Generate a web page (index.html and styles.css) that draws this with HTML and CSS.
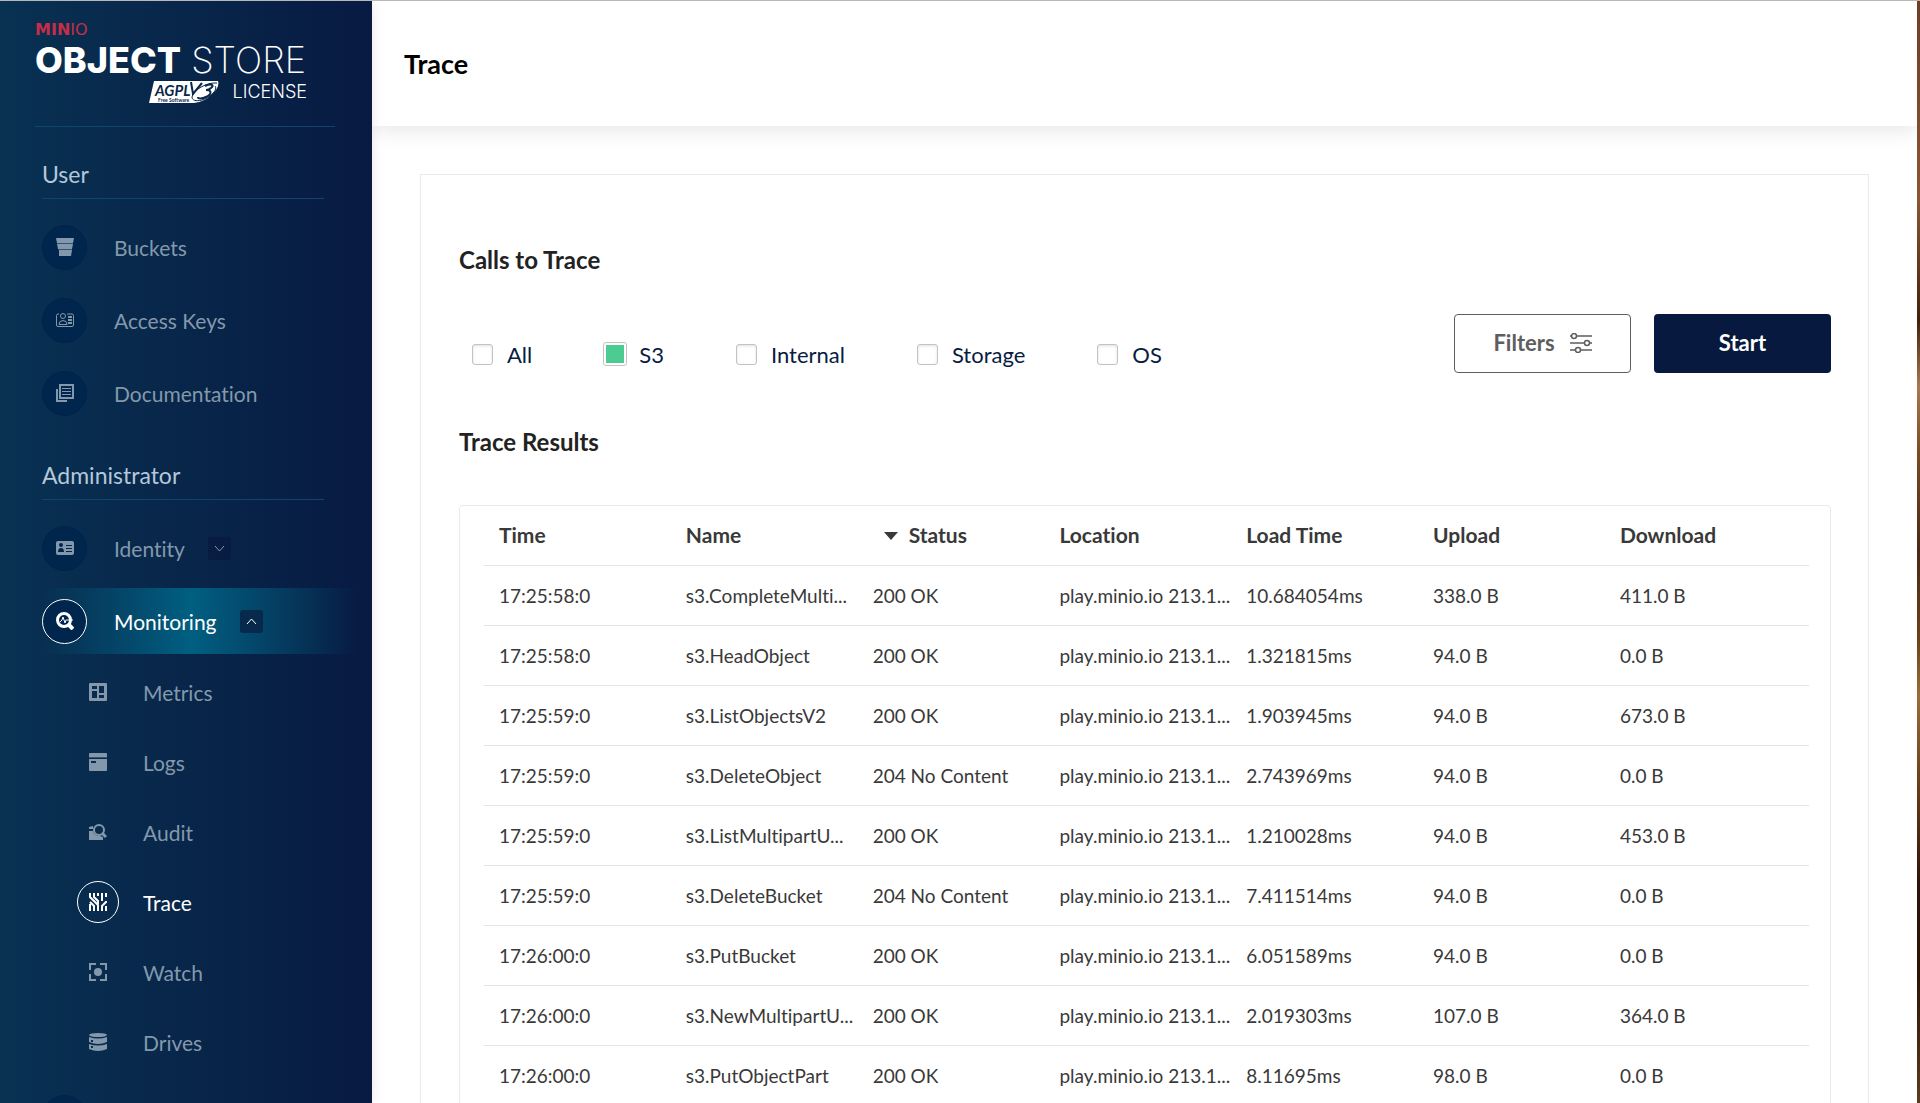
FILE: index.html
```
<!DOCTYPE html>
<html lang="en">

<head>
    <meta charset="UTF-8">
    <meta name="viewport" content="width=device-width, initial-scale=1.0">
    <title>MinIO Console</title>
    <link rel="stylesheet" href="styles.css">
</head>

<body>
    <!-- Sidebar -->
    <aside class="sidebar">
        <div class="logo">
            <div class="logo-brand"><b>MIN</b>IO</div>
            <div class="logo-name"><b>OBJECT</b> STORE</div>
            <div class="logo-license">
                <svg class="agpl" width="70" height="22" viewBox="0 0 70 22">
                    <path d="M5 0H69Q71 6 63 13Q56 21 45 22H0Z" fill="#fff" />
                    <path d="M42 1L44 13L53 2" fill="none" stroke="#08274b" stroke-width="2" />
                    <path d="M68 2C58 1 44 9 43 16C43 22 55 20 61 15C66 11 68 7 66 5" fill="none" stroke="#08274b" stroke-width="1" />
                    <path d="M56 5C62 2 66 4 62 7C60 9 58 9 57 9C63 9 63 13 57 16C53 18 49 18 49 16" fill="none" stroke="#08274b" stroke-width="2" />
                    <text x="6" y="15" font-size="15" font-style="italic" font-weight="700" fill="#08274b">AGPL</text>
                    <text x="9" y="21" font-size="5" font-weight="700" fill="#08274b">Free Software</text>
                </svg>
                <span>LICENSE</span>
            </div>
        </div>

        <nav class="menu">
            <h2 class="menu-title">User</h2>
            <ul class="menu-list">
                <li>
                    <a href="#" class="menu-item">
                        <span class="menu-icon">
                            <svg width="18" height="18" viewBox="0 0 18 18" fill="currentColor">
                                <path d="M0 0H18L17 5H1ZM1 6H17L16 11H2ZM3 12H16L15 18H3Z" />
                                <path d="M1 5H17V6H1ZM2 11H16V12H2Z" opacity=".4" />
                            </svg>
                        </span>
                        Buckets
                    </a>
                </li>
                <li>
                    <a href="#" class="menu-item">
                        <span class="menu-icon">
                            <svg width="18" height="18" viewBox="0 0 18 18" fill="none" stroke="currentColor">
                                <path d="M3 3H2Q.5 3 .5 4.500V14Q.5 15.500 2 15.500H16Q17.500 15.500 17.500 14V4.500Q17.500 3 16 3H11" />
                                <circle cx="7" cy="5" r="2.500" />
                                <path d="M3 13.500Q3 9.500 7 9.500T11 13.500Z" />
                                <path d="M12 6H16M12 9H16M12 12H16" stroke-width="2" />
                            </svg>
                        </span>
                        Access Keys
                    </a>
                </li>
                <li>
                    <a href="#" class="menu-item">
                        <span class="menu-icon">
                            <svg width="18" height="18" viewBox="0 0 18 18" fill="none" stroke="currentColor">
                                <path d="M4 1H17V14H4Z" stroke-width="2" />
                                <path d="M1 5V17H11" stroke-width="2" />
                                <path d="M6 4.500H15M6 7.500H15M6 10.500H15" />
                            </svg>
                        </span>
                        Documentation
                    </a>
                </li>
            </ul>

            <h2 class="menu-title">Administrator</h2>
            <ul class="menu-list">
                <li>
                    <a href="#" class="menu-item">
                        <span class="menu-icon">
                            <svg width="18" height="18" viewBox="0 0 18 18">
                                <rect y="2" width="18" height="14" rx="2" fill="currentColor" />
                                <g fill="#00264d">
                                    <circle cx="5" cy="6" r="2" />
                                    <path d="M2 13Q2 9 5 9T8 13ZM10 6H16V7H10ZM10 9H16V10H10ZM10 12H16V13H10Z" />
                                </g>
                            </svg>
                        </span>
                        Identity
                        <span class="arrow">
                            <svg width="11" height="7" viewBox="0 0 11 7" fill="none" stroke="currentColor"><path d="M1 1L5.500 6L10 1" /></svg>
                        </span>
                    </a>
                </li>
                <li>
                    <a href="#" class="menu-item active">
                        <span class="menu-icon">
                            <svg width="18" height="18" viewBox="0 0 18 18" fill="none" stroke="currentColor">
                                <circle cx="8" cy="8" r="6.500" stroke-width="3" />
                                <path d="M12 12L17 17" stroke-width="4" />
                                <path d="M4 10L6 8L7 5L9 11L10 8H17" />
                            </svg>
                        </span>
                        Monitoring
                        <span class="arrow">
                            <svg width="11" height="7" viewBox="0 0 11 7" fill="none" stroke="currentColor"><path d="M1 6L5.500 1L10 6" /></svg>
                        </span>
                    </a>
                    <ul class="submenu">
                        <li>
                            <a href="#" class="sub-item">
                                <span class="sub-icon">
                                    <svg width="18" height="18" viewBox="0 0 18 18" fill="currentColor" fill-rule="evenodd">
                                        <path d="M1 0H17Q18 0 18 1V17Q18 18 17 18H1Q0 18 0 17V1Q0 0 1 0ZM3 3V6H8V3ZM3 8V15H8V8ZM10 3V10H15V3ZM10 12V15H15V12Z" />
                                    </svg>
                                </span>
                                Metrics
                            </a>
                        </li>
                        <li>
                            <a href="#" class="sub-item">
                                <span class="sub-icon">
                                    <svg width="18" height="18" viewBox="0 0 18 18" fill="currentColor" fill-rule="evenodd">
                                        <path d="M1 0H17Q18 0 18 1V4H0V1Q0 0 1 0ZM0 6H18V17Q18 18 17 18H1Q0 18 0 17ZM2 8V10H7V8Z" />
                                        <path d="M0 4H18V5H0Z" opacity=".4" />
                                    </svg>
                                </span>
                                Logs
                            </a>
                        </li>
                        <li>
                            <a href="#" class="sub-item">
                                <span class="sub-icon">
                                    <svg width="18" height="18" viewBox="0 0 18 18" fill="currentColor">
                                        <path d="M0 4L4 3V6H0ZM0 8H4Q5 13 11 13L14 14V17H0Z" />
                                        <circle cx="10" cy="7" r="5" fill="none" stroke="currentColor" stroke-width="2" />
                                        <path d="M13 10L17 14" stroke="currentColor" stroke-width="3" />
                                    </svg>
                                </span>
                                Audit
                            </a>
                        </li>
                        <li>
                            <a href="#" class="sub-item active">
                                <span class="sub-icon">
                                    <svg width="18" height="18" viewBox="0 0 18 18" fill="none" stroke="currentColor" stroke-width="2">
                                        <path d="M1 0V4L9 12V18M5 0V4L9 8V11M9 0V3M13 0V8M17 0V4M1 9L5 13V18M1 11V18M13 18V13L17 9V8M17 13V18" />
                                    </svg>
                                </span>
                                Trace
                            </a>
                        </li>
                        <li>
                            <a href="#" class="sub-item">
                                <span class="sub-icon">
                                    <svg width="18" height="18" viewBox="0 0 18 18" fill="none" stroke="currentColor" stroke-width="2">
                                        <path d="M1 7V1H7M11 1H17V7M17 11V17H11M7 17H1V11" />
                                        <circle cx="9" cy="9" r="4" fill="currentColor" stroke="none" />
                                    </svg>
                                </span>
                                Watch
                            </a>
                        </li>
                        <li>
                            <a href="#" class="sub-item">
                                <span class="sub-icon">
                                    <svg width="18" height="18" viewBox="0 0 18 18" fill="currentColor" fill-rule="evenodd">
                                        <ellipse cx="9" cy="2" rx="9" ry="2" />
                                        <path d="M0 4Q9 7 18 4V9Q9 13 0 9ZM2 7V9H4V7ZM0 11Q9 14 18 11V16Q9 20 0 16ZM2 13V15H4V13Z" />
                                    </svg>
                                </span>
                                Drives
                            </a>
                        </li>
                    </ul>
                </li>
                <li>
                    <a href="#" class="menu-item" aria-label="Notifications">
                        <span class="menu-icon"></span>
                    </a>
                </li>
            </ul>
        </nav>
    </aside>

    <!-- Main content -->
    <main class="main">
        <header class="page-header">
            <h1>Trace</h1>
        </header>

        <section class="card">
            <h3>Calls to Trace</h3>
            <div class="toolbar">
                <div class="checks">
                    <label class="check"><input type="checkbox"><span>All</span></label>
                    <label class="check"><input type="checkbox" checked><span>S3</span></label>
                    <label class="check"><input type="checkbox"><span>Internal</span></label>
                    <label class="check"><input type="checkbox"><span>Storage</span></label>
                    <label class="check"><input type="checkbox"><span>OS</span></label>
                </div>
                <div class="actions">
                    <button type="button" class="btn btn-outline">
                        Filters
                        <svg width="22" height="20" viewBox="0 0 22 20" fill="none" stroke="currentColor" stroke-width="1.500">
                            <path d="M0 3H2M7 3H22M0 10H14M19 10H22M0 17H6M11 17H22" />
                            <circle cx="4" cy="3" r="2.500" />
                            <circle cx="17" cy="10" r="2.500" />
                            <circle cx="8" cy="17" r="2.500" />
                        </svg>
                    </button>
                    <button type="button" class="btn btn-primary">Start</button>
                </div>
            </div>

            <h3>Trace Results</h3>
            <div class="table-box">
                <table>
                    <thead>
                        <tr>
                            <th>Time</th>
                            <th>Name</th>
                            <th class="sorted">
                                <svg width="14" height="8" viewBox="0 0 14 8" fill="currentColor"><path d="M0 0H14L7 8Z" /></svg>Status
                            </th>
                            <th>Location</th>
                            <th>Load Time</th>
                            <th>Upload</th>
                            <th>Download</th>
                        </tr>
                    </thead>
                    <tbody>
                        <tr>
                            <td>17:25:58:0</td>
                            <td>s3.CompleteMulti...</td>
                            <td>200 OK</td>
                            <td>play.minio.io 213.1...</td>
                            <td>10.684054ms</td>
                            <td>338.0 B</td>
                            <td>411.0 B</td>
                        </tr>
                        <tr>
                            <td>17:25:58:0</td>
                            <td>s3.HeadObject</td>
                            <td>200 OK</td>
                            <td>play.minio.io 213.1...</td>
                            <td>1.321815ms</td>
                            <td>94.0 B</td>
                            <td>0.0 B</td>
                        </tr>
                        <tr>
                            <td>17:25:59:0</td>
                            <td>s3.ListObjectsV2</td>
                            <td>200 OK</td>
                            <td>play.minio.io 213.1...</td>
                            <td>1.903945ms</td>
                            <td>94.0 B</td>
                            <td>673.0 B</td>
                        </tr>
                        <tr>
                            <td>17:25:59:0</td>
                            <td>s3.DeleteObject</td>
                            <td>204 No Content</td>
                            <td>play.minio.io 213.1...</td>
                            <td>2.743969ms</td>
                            <td>94.0 B</td>
                            <td>0.0 B</td>
                        </tr>
                        <tr>
                            <td>17:25:59:0</td>
                            <td>s3.ListMultipartU...</td>
                            <td>200 OK</td>
                            <td>play.minio.io 213.1...</td>
                            <td>1.210028ms</td>
                            <td>94.0 B</td>
                            <td>453.0 B</td>
                        </tr>
                        <tr>
                            <td>17:25:59:0</td>
                            <td>s3.DeleteBucket</td>
                            <td>204 No Content</td>
                            <td>play.minio.io 213.1...</td>
                            <td>7.411514ms</td>
                            <td>94.0 B</td>
                            <td>0.0 B</td>
                        </tr>
                        <tr>
                            <td>17:26:00:0</td>
                            <td>s3.PutBucket</td>
                            <td>200 OK</td>
                            <td>play.minio.io 213.1...</td>
                            <td>6.051589ms</td>
                            <td>94.0 B</td>
                            <td>0.0 B</td>
                        </tr>
                        <tr>
                            <td>17:26:00:0</td>
                            <td>s3.NewMultipartU...</td>
                            <td>200 OK</td>
                            <td>play.minio.io 213.1...</td>
                            <td>2.019303ms</td>
                            <td>107.0 B</td>
                            <td>364.0 B</td>
                        </tr>
                        <tr>
                            <td>17:26:00:0</td>
                            <td>s3.PutObjectPart</td>
                            <td>200 OK</td>
                            <td>play.minio.io 213.1...</td>
                            <td>8.11695ms</td>
                            <td>98.0 B</td>
                            <td>0.0 B</td>
                        </tr>
                    </tbody>
                </table>
            </div>
        </section>
    </main>
    <div class="edge"></div>
</body>

</html>
```
FILE: styles.css
```
/* Reset */
* {
    margin: 0;
    padding: 0;
    box-sizing: border-box;
    font-family: Lato, sans-serif;
    font-variant-ligatures: none;
}

body {
    display: flex;
    height: 100vh;
    overflow: hidden;
    border-top: 1px solid #b8b8b8;
    background-color: #fff;
    color: #393939;
}

ul {
    list-style: none;
}

a {
    text-decoration: none;
}

/* Sidebar */
.sidebar {
    flex: 0 0 372px;
    padding: 18px 36px 0 35px;
    background: linear-gradient(90deg, #083152 0%, #081a42 100%);
    box-shadow: 0 0 12px rgba(0, 0, 0, 0.1);
    overflow: hidden;
    z-index: 1;
}

.logo {
    width: 300px;
    height: 108px;
    padding-right: 28px;
    border-bottom: 1px solid #0f446c;
    color: #fff;
}

.logo-brand {
    font-family: "DejaVu Sans", sans-serif;
    font-size: 16px;
    line-height: 22px;
    color: #c72c48;
}

.logo-brand b {
    font-family: "DejaVu Sans", sans-serif;
    font-weight: 700;
}

.logo-name {
    font-family: Inter, sans-serif;
    font-size: 36px;
    font-weight: 200;
    line-height: 38px;
    white-space: nowrap;
}

.logo-name b {
    font-family: Inter, sans-serif;
    font-weight: 800;
}

.logo-license {
    display: flex;
    justify-content: flex-end;
    align-items: center;
    gap: 14px;
    font-size: 18px;
    line-height: 26px;
}

.logo-license span {
    font-family: Inter, sans-serif;
    font-weight: 300;
}

/* Menu */
.menu {
    padding: 0 12px 0 7px;
}

.menu-title {
    height: 72px;
    padding-top: 31px;
    border-bottom: 1px solid #0f446c;
    font-size: 23px;
    font-weight: 400;
    line-height: 32px;
    color: #b4c8da;
}

.menu-list {
    display: flex;
    flex-direction: column;
    gap: 7px;
    margin: 15px -32px 2px 0;
}

.menu-item {
    display: flex;
    align-items: center;
    height: 66px;
    font-size: 21px;
    color: #8399ab;
}

.menu-icon {
    display: flex;
    justify-content: center;
    align-items: center;
    width: 45px;
    height: 45px;
    margin-right: 27px;
    border: 1px solid #00234c;
    border-radius: 50%;
    background-color: #00264d;
}

.arrow {
    display: flex;
    justify-content: center;
    align-items: center;
    width: 23px;
    height: 23px;
    margin-left: 23px;
    border-radius: 3px;
    background-color: #081c42;
}

.menu-item.active {
    background: linear-gradient(90deg, transparent 0%, #005f81 47%, transparent 100%);
    color: #fff;
}

.menu-item.active .menu-icon {
    border-color: #fff;
}

.menu-item.active .arrow {
    background-color: #072a4c;
}

.submenu {
    padding: 3px 0 0 35px;
}

.sub-item {
    display: flex;
    align-items: center;
    height: 70px;
    font-size: 21px;
    color: #8399ab;
}

.sub-item.active {
    color: #fff;
}

.sub-icon {
    display: flex;
    justify-content: center;
    align-items: center;
    width: 42px;
    height: 42px;
    margin-right: 24px;
    border-radius: 50%;
}

.sub-item.active .sub-icon {
    border: 1px solid #fff;
}

/* Main content */
.main {
    display: flex;
    flex-direction: column;
    flex: 1;
    min-width: 0;
    overflow: hidden;
}

.page-header {
    display: flex;
    align-items: center;
    flex: 0 0 125px;
    padding: 0 32px;
    box-shadow: 0 4px 20px rgba(0, 0, 0, 0.1);
}

h1 {
    font-size: 27px;
    font-weight: 700;
    line-height: 32px;
    color: #000;
}

.card {
    flex: 1 0 auto;
    margin: 48px 48px 0;
    padding: 69px 37px 0 38px;
    border: 1px solid #eaeaea;
    border-bottom: none;
}

h3 {
    font-size: 24px;
    font-weight: 700;
    line-height: 32px;
    color: #222;
}

.toolbar {
    display: flex;
    justify-content: space-between;
    height: 59px;
    margin: 38px 0 53px;
}

.checks {
    display: flex;
    align-items: flex-end;
    gap: 71px;
    padding: 0 12px 3px;
}

.check {
    display: flex;
    align-items: center;
    gap: 12px;
    font-size: 22px;
    line-height: 30px;
    color: #081c42;
}

.check input {
    appearance: none;
    width: 21px;
    height: 21px;
    margin: 0 2px 2px 1px;
    border: 1px solid #c3c3c3;
    border-radius: 3px;
    box-shadow: inset 0 1px 3px rgba(0, 0, 0, 0.12);
}

.check input:checked {
    width: 24px;
    height: 24px;
    margin: 0 0 2px;
    padding: 2px;
    background: #4ccb92 content-box;
    box-shadow: none;
}

.actions {
    display: flex;
    gap: 23px;
}

.btn {
    display: flex;
    justify-content: center;
    align-items: center;
    gap: 15px;
    width: 177px;
    padding-bottom: 2px;
    border-radius: 4px;
    font-size: 22px;
    font-weight: 700;
    cursor: pointer;
}

.btn-outline {
    border: 1px solid #5e5e5e;
    background-color: #fff;
    color: #5e5e5e;
}

.btn-primary {
    border: none;
    background-color: #07193e;
    color: #fff;
}

/* Results table */
.table-box {
    margin-top: 47px;
    padding: 0 21px 24px 24px;
    border: 1px solid #eaeaea;
    border-radius: 4px;
}

table {
    width: 100%;
    table-layout: fixed;
    border-collapse: collapse;
}

th,
td {
    width: 14.1%;
    height: 60px;
    padding: 0 0 0 15px;
    border-bottom: 1px solid #e5e5e5;
    font-size: 19px;
    text-align: left;
    white-space: nowrap;
    overflow: hidden;
    text-overflow: ellipsis;
}

th {
    height: 59px;
    padding-bottom: 2px;
    font-size: 21px;
}

th:last-child {
    width: auto;
}

.sorted {
    padding-left: 26px;
}

.sorted svg {
    margin-right: 11px;
    vertical-align: 3px;
}

/* Strip along the right side of the window */
.edge {
    flex: 0 0 3px;
    background: linear-gradient(#6f3c28, #8a5630 18%, #43200c 29%, #a87850 35%, #7a4a20 41%, #4a2818 50%, #6b4216 58%, #9a6c3c 63%, #6a3e16 71%, #2e140c 80%, #2a1204 88%, #5c3c1e);
}
```
